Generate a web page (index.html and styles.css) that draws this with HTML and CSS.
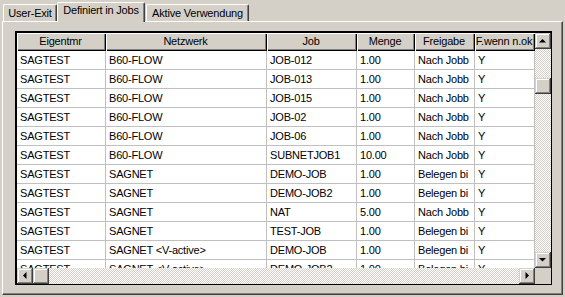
FILE: index.html
```html
<!DOCTYPE html>
<html lang="de">
	<head>
		<meta charset="UTF-8" />
		<title>Definiert in Jobs</title>
		<link rel="stylesheet" href="styles.css">
	</head>
	<body>

		<div class="tabs">
			<div class="tab first">User-Exit</div>
			<div class="tab active">Definiert in Jobs</div>
			<div class="tab last">Aktive Verwendung</div>
		</div>

		<div class="page">
			<div class="grid">
				<div class="cells">
					<div class="row head">
						<div>Eigentmr</div>
						<div>Netzwerk</div>
						<div>Job</div>
						<div>Menge</div>
						<div>Freigabe</div>
						<div>F.wenn n.ok</div>
					</div>
					<div id="rows"></div>
				</div>

				<div class="vscroll">
					<div class="btn">
						<svg width="16" height="16"><polygon points="4,9.5 11,9.5 7.5,6" /></svg>
					</div>
					<div class="thumb vthumb"></div>
					<div class="btn end">
						<svg width="16" height="16"><polygon points="4,6 11,6 7.5,9.5" /></svg>
					</div>
				</div>

				<div class="hscroll">
					<div class="btn">
						<svg width="16" height="16"><polygon points="9.5,4 9.5,11 6,7.5" /></svg>
					</div>
					<div class="thumb"></div>
					<div class="btn end">
						<svg width="16" height="16"><polygon points="6.5,4 6.5,11 10,7.5" /></svg>
					</div>
				</div>

				<div class="corner"></div>
			</div>
		</div>

		<script>
			const jobs = [
				["SAGTEST", "B60-FLOW", "JOB-012", "1.00", "Nach Jobb", "Y"],
				["SAGTEST", "B60-FLOW", "JOB-013", "1.00", "Nach Jobb", "Y"],
				["SAGTEST", "B60-FLOW", "JOB-015", "1.00", "Nach Jobb", "Y"],
				["SAGTEST", "B60-FLOW", "JOB-02", "1.00", "Nach Jobb", "Y"],
				["SAGTEST", "B60-FLOW", "JOB-06", "1.00", "Nach Jobb", "Y"],
				["SAGTEST", "B60-FLOW", "SUBNETJOB1", "10.00", "Nach Jobb", "Y"],
				["SAGTEST", "SAGNET", "DEMO-JOB", "1.00", "Belegen bi", "Y"],
				["SAGTEST", "SAGNET", "DEMO-JOB2", "1.00", "Belegen bi", "Y"],
				["SAGTEST", "SAGNET", "NAT", "5.00", "Nach Jobb", "Y"],
				["SAGTEST", "SAGNET", "TEST-JOB", "1.00", "Belegen bi", "Y"],
				["SAGTEST", "SAGNET <V-active>", "DEMO-JOB", "1.00", "Belegen bi", "Y"],
				["SAGTEST", "SAGNET <V-active>", "DEMO-JOB2", "1.00", "Belegen bi", "Y"]
			];

			const rows = document.getElementById("rows");
			jobs.forEach(job => {
				const row = document.createElement("div");
				row.className = "row";
				job.forEach(value => {
					const cell = document.createElement("div");
					cell.textContent = value;
					row.appendChild(cell);
				});
				rows.appendChild(row);
			});
		</script>

	</body>
</html>
```

FILE: styles.css
```css
* {
	box-sizing: border-box;
	margin: 0;
	padding: 0;
}

body {
	background: #d4d0c8;
	color: #000;
	font-family: 'Liberation Sans', Arial, sans-serif;
	font-size: 11px;
	letter-spacing: -0.2px;
	width: 565px;
	height: 297px;
	overflow: hidden;
}

/* tabs */

.tabs {
	display: flex;
	align-items: flex-end;
	height: 21px;
	padding-left: 3px;
}

.tab {
	height: 17px;
	padding-top: 2px;
	line-height: 13px;
	text-align: center;
	white-space: nowrap;
	border-top: 1px solid #fff;
	border-left: 1px solid #fff;
	border-right: 1px solid #404040;
	border-radius: 2px 2px 0 0;
	box-shadow: inset -1px 0 #808080;
}

.tab.first {
	width: 54px;
}

.tab.last {
	width: 103px;
	margin-left: 1px;
}

.tab.active {
	position: relative;
	z-index: 1;
	width: 88px;
	height: 20px;
	padding-top: 1px;
	margin-bottom: -1px;
	background: #d4d0c8;
}

/* page */

.page {
	margin-left: 2px;
	width: 561px;
	height: 274px;
	padding: 9px 0 0 12px;
	border-top: 1px solid #fff;
	border-left: 1px solid #fff;
	border-right: 1px solid #404040;
	border-bottom: 1px solid #404040;
	box-shadow: inset -1px -1px #808080;
}

/* string grid */

.grid {
	display: grid;
	grid-template-columns: 518px 16px;
	grid-template-rows: 235px 16px;
	width: 537px;
	height: 254px;
	border-top: 2px solid #000;
	border-left: 2px solid #000;
	border-right: 1px solid #000;
	border-bottom: 1px solid #000;
	background: #fff;
}

.cells {
	overflow: hidden;
	background: #fff;
}

.row {
	display: grid;
	grid-template-columns: 89px 161px 90px 58px 60px 60px;
}

.row div {
	height: 19px;
	line-height: 18px;
	padding-left: 3px;
	white-space: nowrap;
	overflow: hidden;
	border-right: 1px solid #c0c0c0;
	border-bottom: 1px solid #c0c0c0;
}

.row.head div {
	display: flex;
	justify-content: center;
	height: 18px;
	line-height: 17px;
	padding: 0 2px 0 0;
	background: #d4d0c8;
	border: none;
	box-shadow: inset 1px 1px #fff, inset -1px -1px #000, inset -2px -2px #808080;
}

/* scroll bars */

.vscroll,
.hscroll {
	display: flex;
	background: repeating-conic-gradient(#fff 0 25%, #d4d0c8 0 50%) 0 0 / 2px 2px;
}

.vscroll {
	flex-direction: column;
}

.btn,
.thumb {
	flex: 0 0 16px;
	width: 16px;
	height: 16px;
	background: #d4d0c8;
	box-shadow: inset -1px -1px #404040, inset 1px 1px #d4d0c8, inset -2px -2px #808080, inset 2px 2px #fff;
}

.btn svg {
	display: block;
	fill: #000;
}

.vthumb {
	margin-top: 29px;
}

.vscroll .end {
	margin-top: auto;
}

.hscroll .end {
	margin-left: auto;
}

.corner {
	background: #d4d0c8;
}
```
